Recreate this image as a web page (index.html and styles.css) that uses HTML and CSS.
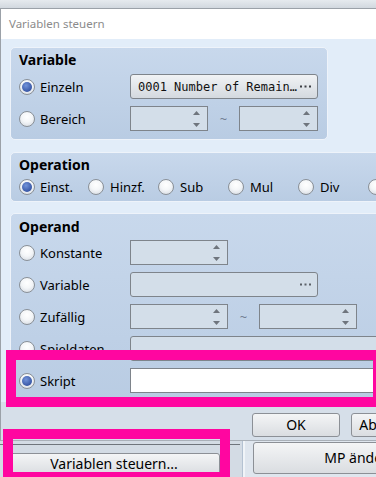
FILE: index.html
```html
<!DOCTYPE html>
<html>
<head>
<meta charset="utf-8">
<link rel="stylesheet" href="styles.css">
</head>
<body>
<div class="desk"></div>
<div class="dialog">
  <div class="titlebar">Variablen steuern</div>
  <div class="body">
    <section class="group g-var">
      <div class="gtitle">Variable</div>
      <div class="rows">
        <div class="row">
          <label class="opt"><span class="radio on"></span>Einzeln</label>
          <div class="btnfield w188"><span class="mono">0001 Number of Remain…</span><svg class="dots" width="11" height="3" viewBox="0 0 11 3"><rect x="0" y="0.5" width="2" height="2"/><rect x="4.5" y="0.5" width="2" height="2"/><rect x="9" y="0.5" width="2" height="2"/></svg></div>
        </div>
        <div class="row">
          <label class="opt"><span class="radio"></span>Bereich</label>
          <div class="spin w78"><svg width="7" height="18" viewBox="0 0 7 18"><polygon points="0,5 3.5,1 7,5"/><polygon points="0,13 3.5,17 7,13"/></svg></div>
          <span class="tilde">~</span>
          <div class="spin w79"><svg width="7" height="18" viewBox="0 0 7 18"><polygon points="0,5 3.5,1 7,5"/><polygon points="0,13 3.5,17 7,13"/></svg></div>
        </div>
      </div>
    </section>

    <section class="group g-op">
      <div class="gtitle">Operation</div>
      <div class="ops">
        <label class="opt2"><span class="radio on"></span>Einst.</label>
        <label class="opt2"><span class="radio"></span>Hinzf.</label>
        <label class="opt2"><span class="radio"></span>Sub</label>
        <label class="opt2"><span class="radio"></span>Mul</label>
        <label class="opt2"><span class="radio"></span>Div</label>
        <label class="opt2"><span class="radio"></span></label>
      </div>
    </section>

    <section class="group g-opd">
      <div class="gtitle">Operand</div>
      <div class="rows">
        <div class="row">
          <label class="opt"><span class="radio"></span>Konstante</label>
          <div class="spin w98"><svg width="7" height="18" viewBox="0 0 7 18"><polygon points="0,5 3.5,1 7,5"/><polygon points="0,13 3.5,17 7,13"/></svg></div>
        </div>
        <div class="row">
          <label class="opt"><span class="radio"></span>Variable</label>
          <div class="btnfield off w188"><span></span><svg class="dots" width="11" height="3" viewBox="0 0 11 3"><rect x="0" y="0.5" width="2" height="2"/><rect x="4.5" y="0.5" width="2" height="2"/><rect x="9" y="0.5" width="2" height="2"/></svg></div>
        </div>
        <div class="row">
          <label class="opt"><span class="radio"></span>Zufällig</label>
          <div class="spin w98"><svg width="7" height="18" viewBox="0 0 7 18"><polygon points="0,5 3.5,1 7,5"/><polygon points="0,13 3.5,17 7,13"/></svg></div>
          <span class="tilde">~</span>
          <div class="spin w98"><svg width="7" height="18" viewBox="0 0 7 18"><polygon points="0,5 3.5,1 7,5"/><polygon points="0,13 3.5,17 7,13"/></svg></div>
        </div>
        <div class="row">
          <label class="opt"><span class="radio"></span>Spieldaten</label>
          <div class="btnfield off w280"></div>
        </div>
        <div class="row">
          <label class="opt"><span class="radio on"></span>Skript</label>
          <div class="textfield"></div>
        </div>
      </div>
    </section>

    <div class="footer">
      <button class="btn">OK</button>
      <button class="btn">Abbrechen</button>
    </div>
  </div>
</div>
<div class="under">
  <div class="upanel">
    <div class="uline"></div>
    <button class="btn ubtn">Variablen steuern...</button>
  </div>
  <div class="usep"></div>
  <div class="upanel right">
    <button class="btn mpbtn">MP ändern...</button>
  </div>
</div>
<div class="mark mark1"></div>
<div class="mark mark2"></div>
</body>
</html>
```

FILE: styles.css
```css
* { box-sizing: border-box; }
html, body { margin: 0; padding: 0; overflow: hidden; width: 376px; height: 477px; }
body {
  font-family: "Noto Sans", "DejaVu Sans", sans-serif;
  font-size: 13px;
  color: #000;
  background: #d3dbe4;
  position: relative;
}
.desk { height: 8px; background: linear-gradient(#e6eaee, #d2d8df); }
.dialog {
  width: 440px;
  border-top: 1px solid #9ba1a8;
  border-left: 1px solid #9ba1a8;
  border-bottom: 1px solid #a9b0b8;
  background: #e2edf9;
}
.titlebar {
  height: 30px;
  background: #fff;
  color: #8b8b8b;
  font-size: 11.5px;
  line-height: 30px;
  padding-left: 8px;
}
.body { padding: 8px 0 0 9px; }
.group {
  background: linear-gradient(#c8d8ec, #b9cce3);
  border: 1px solid #eef3fa;
  border-radius: 5px;
}
.g-var { width: 318px; padding: 2px 9px 8px 8px; }
.g-op { margin-top: 12px; padding: 2px 0 6px 8px; height: 50px; }
.g-opd { margin-top: 11px; padding: 3px 0 0 8px; height: 189px; border-bottom-left-radius: 0; }
.gtitle { font-weight: 700; font-size: 14px; line-height: 20px; height: 20px; }
.rows { display: flex; flex-direction: column; gap: 7px; margin-top: 4px; }
.g-opd .rows { margin-top: 3px; }
.row { display: flex; align-items: center; height: 25px; }
.opt { display: flex; align-items: center; gap: 5px; width: 111px; flex: none; }
.radio {
  width: 16px; height: 16px; flex: none;
  border-radius: 50%;
  border: 1px solid #8a9097;
  background: radial-gradient(circle at 50% 35%, #ffffff 0%, #f4f6f8 45%, #d0d6de 100%);
  display: flex; align-items: center; justify-content: center;
}
.radio.on::after {
  content: "";
  width: 10px; height: 10px; border-radius: 50%;
  background: radial-gradient(circle at 40% 35%, #7394da, #3453a3 75%);
}
.btnfield {
  height: 25px; flex: none;
  border: 1px solid #7e848b;
  border-radius: 3px;
  background: linear-gradient(#f1f3f5, #d4d9df);
  display: flex; align-items: center; justify-content: space-between;
  padding: 0 6px 0 7px;
}
.btnfield.off { background: #d3dee9; }
.mono { font-family: "DejaVu Sans Mono", "Liberation Mono", monospace; font-size: 12px; color: #111; }
.dots { fill: #3c3f44; }
.btnfield.off .dots { fill: #5b6068; }
.w188 { width: 188px; }
.w280 { width: 280px; }
.w78 { width: 78px; }
.w79 { width: 79px; }
.w98 { width: 98px; }
.spin {
  height: 25px; flex: none;
  border: 1px solid #7e848b;
  background: #d3dee9;
  display: flex; align-items: center; justify-content: flex-end;
  padding-right: 7px;
}
.spin svg { fill: #6f757d; }
.tilde { width: 31px; text-align: center; color: #6f7c90; font-size: 13px; flex: none; }
.textfield { width: 260px; height: 25px; background: #fff; border: 1px solid #7e848b; flex: none; }
.ops { display: grid; grid-template-columns: 69px 70px 70px 70px 70px 70px; margin-top: 3px; height: 17px; }
.opt2 { display: flex; align-items: center; gap: 6px; white-space: nowrap; }
.opt2:first-child { gap: 5px; }
.footer {
  margin-left: -9px;
  background: #d6dfe9;
  height: 38px;
  padding: 11px 0 0 251px;
  display: flex; gap: 11px;
}
.btn {
  font-family: "Noto Sans", "DejaVu Sans", sans-serif;
  font-size: 14px;
  color: #000;
  height: 24px;
  width: 88px;
  border: 1px solid #8c9096;
  border-radius: 3px;
  background: linear-gradient(#f4f5f6, #dadde1);
  padding: 0;
  line-height: 20px;
}
.under { display: flex; height: 40px; }
.upanel { width: 242px; padding-left: 8px; flex: none; }
.uline { height: 1px; background: #6f757c; margin: 3px 0 8px -8px; width: 240px; }
.ubtn { width: 212px; height: 22px; }
.usep { width: 3px; background: #f0f4f8; border-left: 1px solid #b4c2d2; flex: none; }
.upanel.right { padding: 1px 0 0 8px; background: #dfe6ee; width: 300px; }
.mpbtn { width: 226px; height: 32px; }
.mark { position: absolute; border: 10px solid #ff06a0; }
.mark1 { left: 6px; top: 350px; width: 377px; height: 57px; }
.mark2 { left: 3px; top: 429px; width: 227px; height: 53px; }
```
